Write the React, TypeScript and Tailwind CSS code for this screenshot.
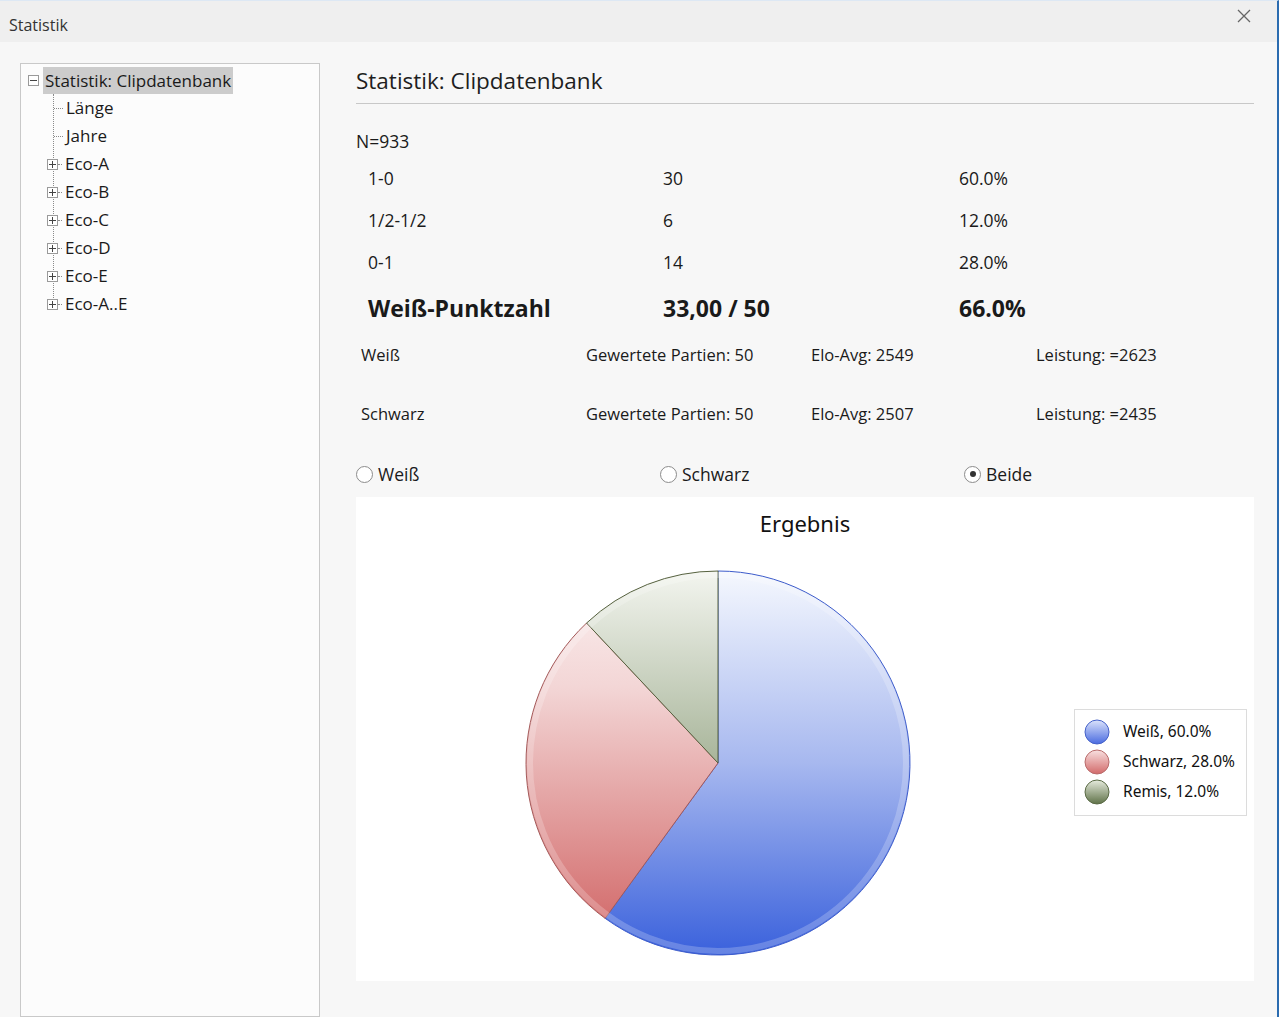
import React from 'react';

const font = { fontFamily: '"Open Sans", "Noto Sans", sans-serif' };

function Box({ minus }: { minus?: boolean }) {
  return (
    <span className="relative flex h-[11px] w-[11px] items-center justify-center border border-[#9a9a9a] bg-white">
      <span className="absolute h-px w-[7px] bg-[#444]" />
      {!minus && <span className="absolute h-[7px] w-px bg-[#444]" />}
    </span>
  );
}

function TreePanel() {
  const kids = ['Länge', 'Jahre', 'Eco-A', 'Eco-B', 'Eco-C', 'Eco-D', 'Eco-E', 'Eco-A..E'];
  return (
    <div className="w-[300px] shrink-0 self-stretch border border-[#c9c9c9] bg-[#fcfcfc] pt-[2px]">
      <div className="flex h-[28px] items-center pl-[7px]">
        <Box minus />
        <span className="ml-[4px] bg-[#cccccc] px-[2px] leading-[27px] text-[17px] text-[#1a1a1a]">Statistik: Clipdatenbank</span>
      </div>
      <div className="relative">
        {/* dotted trunk */}
        <div className="absolute left-[32px] top-0 h-[210px] border-l border-dotted border-[#8a8a8a]" />
        {kids.map((k, i) => (
          <div key={k} className="relative flex h-[28px] items-center pl-[26px]">
            {i < 2 ? (
              <span className="ml-[7px] w-[9px] border-t border-dotted border-[#8a8a8a]" />
            ) : (
              <>
                <Box />
                <span className="w-[4px] border-t border-dotted border-[#8a8a8a]" />
              </>
            )}
            <span className="ml-[3px] text-[17px] text-[#1a1a1a]">{k}</span>
          </div>
        ))}
      </div>
    </div>
  );
}

function Radio({ label, checked }: { label: string; checked?: boolean }) {
  return (
    <div className="flex items-center gap-[5px]">
      <span className="flex h-[17px] w-[17px] items-center justify-center rounded-full border border-[#8c8c8c] bg-white">
        {checked && <span className="h-[6px] w-[6px] rounded-full bg-[#333]" />}
      </span>
      <span>{label}</span>
    </div>
  );
}

function Pie() {
  return (
    <svg width="400" height="400" viewBox="0 0 400 400">
      <defs>
        <linearGradient id="gb" gradientUnits="userSpaceOnUse" x1="0" y1="8" x2="0" y2="392">
          <stop offset="0" stopColor="#f5f8fe" />
          <stop offset="0.5" stopColor="#a7b8ef" />
          <stop offset="1" stopColor="#3a61dc" />
        </linearGradient>
        <linearGradient id="gr" gradientUnits="userSpaceOnUse" x1="0" y1="8" x2="0" y2="392">
          <stop offset="0" stopColor="#fcf2f2" />
          <stop offset="0.3" stopColor="#f3d6d6" />
          <stop offset="1" stopColor="#cf5f5f" />
        </linearGradient>
        <linearGradient id="gg" gradientUnits="userSpaceOnUse" x1="0" y1="8" x2="0" y2="392">
          <stop offset="0" stopColor="#f3f5ef" />
          <stop offset="0.5" stopColor="#a8b59a" />
          <stop offset="1" stopColor="#6d7d5a" />
        </linearGradient>
      </defs>
      <path d="M200,200 L200,8 A192,192 0 1 1 87.14,355.33 Z" fill="url(#gb)" stroke="#3d5ccb" strokeWidth="1" />
      <path d="M200,200 L87.14,355.33 A192,192 0 0 1 68.57,60.03 Z" fill="url(#gr)" stroke="#a45a5a" strokeWidth="1" />
      <path d="M200,200 L68.57,60.03 A192,192 0 0 1 200,8 Z" fill="url(#gg)" stroke="#56613f" strokeWidth="1" />
      <circle cx="200" cy="200" r="188" fill="none" stroke="#ffffff" strokeOpacity="0.22" strokeWidth="6" />
    </svg>
  );
}

function Dot({ from, to, edge }: { from: string; to: string; edge: string }) {
  const id = 'd' + edge.slice(1);
  return (
    <svg width="26" height="26" viewBox="0 0 26 26">
      <defs>
        <linearGradient id={id} x1="0" y1="0" x2="0" y2="1">
          <stop offset="0" stopColor={from} />
          <stop offset="1" stopColor={to} />
        </linearGradient>
      </defs>
      <circle cx="13" cy="13" r="12" fill={`url(#${id})`} stroke={edge} strokeWidth="1" />
    </svg>
  );
}

function Legend() {
  const items = [
    { t: 'Weiß, 60.0%', from: '#dbe3fb', to: '#4a6be0', edge: '#4561c8' },
    { t: 'Schwarz, 28.0%', from: '#f8e0e0', to: '#d26a6a', edge: '#b86b6b' },
    { t: 'Remis, 12.0%', from: '#e6ebdd', to: '#5f7248', edge: '#5a6a45' },
  ];
  return (
    <div className="mr-[7px] flex w-[173px] flex-col gap-[4px] border border-[#dcdcdc] bg-white pb-[10px] pl-[9px] pt-[9px]" style={{ fontFamily: '"Noto Sans", "Open Sans", sans-serif' }}>
      {items.map((i) => (
        <div key={i.t} className="flex h-[26px] items-center gap-[13px] text-[15.5px] text-[#111]">
          <Dot from={i.from} to={i.to} edge={i.edge} />
          <span>{i.t}</span>
        </div>
      ))}
    </div>
  );
}

export default function App() {
  return (
    <div className="flex h-[1017px] w-[1279px] flex-col overflow-hidden border-t border-r-2 border-t-[#dde8f4] border-r-[#2b6cb0] bg-[#f7f7f7] text-[#1a1a1a]" style={font}>
      {/* title bar */}
      <div className="flex h-[41px] shrink-0 items-start justify-between bg-[#efefef] pl-[9px] pr-[26px]">
        <span className="pt-[12px] text-[16px] leading-[24px] text-[#333]">Statistik</span>
        <svg width="14" height="14" viewBox="0 0 14 14" className="mt-[8px]">
          <path d="M1 1 L13 13 M13 1 L1 13" stroke="#666" strokeWidth="1.3" fill="none" />
        </svg>
      </div>

      <div className="flex flex-1 gap-[36px] pl-[20px] pr-[23px] pt-[21px]">
        <TreePanel />

        <div className="flex flex-1 flex-col text-[17.5px]">
          <div className="border-b border-[#c8c8c8] pb-[7px] pt-[3px] text-[22.5px] leading-[30px] text-[#1e1e1e]">Statistik: Clipdatenbank</div>

          <div className="mt-[21px] flex h-[32px] items-center">N=933</div>

          {[
            ['1-0', '30', '60.0%'],
            ['1/2-1/2', '6', '12.0%'],
            ['0-1', '14', '28.0%'],
          ].map((r) => (
            <div key={r[0]} className="grid h-[42px] grid-cols-[295px_296px_1fr] items-center pl-[12px]">
              <span>{r[0]}</span>
              <span>{r[1]}</span>
              <span>{r[2]}</span>
            </div>
          ))}

          <div className="grid h-[50px] grid-cols-[295px_296px_1fr] items-center pl-[12px] text-[23px] font-bold">
            <span>Weiß-Punktzahl</span>
            <span>33,00 / 50</span>
            <span>66.0%</span>
          </div>

          {[
            ['Weiß', '2549', '2623'],
            ['Schwarz', '2507', '2435'],
          ].map((r, i) => (
            <div key={r[0]} className={`grid h-[44px] grid-cols-[225px_225px_225px_1fr] items-center pl-[5px] text-[16.5px] ${i === 1 ? 'mt-[15px]' : ''}`}>
              <span>{r[0]}</span>
              <span>Gewertete Partien: 50</span>
              <span>Elo-Avg: {r[1]}</span>
              <span>Leistung: ={r[2]}</span>
            </div>
          ))}

          <div className="mt-[18px] grid h-[40px] grid-cols-[304px_304px_1fr] items-center">
            <Radio label="Weiß" />
            <Radio label="Schwarz" />
            <Radio label="Beide" checked />
          </div>

          <div className="mt-[3px] flex h-[484px] flex-col bg-white">
            <div className="pt-[11px] text-center text-[22px] leading-[30px] text-[#111]" style={{ fontFamily: '"Noto Sans", "Open Sans", sans-serif' }}>Ergebnis</div>
            <div className="flex flex-1 items-center pt-[6px]">
              <div className="flex flex-1 justify-center pl-[6px]">
                <Pie />
              </div>
              <Legend />
            </div>
          </div>
        </div>
      </div>
    </div>
  );
}
